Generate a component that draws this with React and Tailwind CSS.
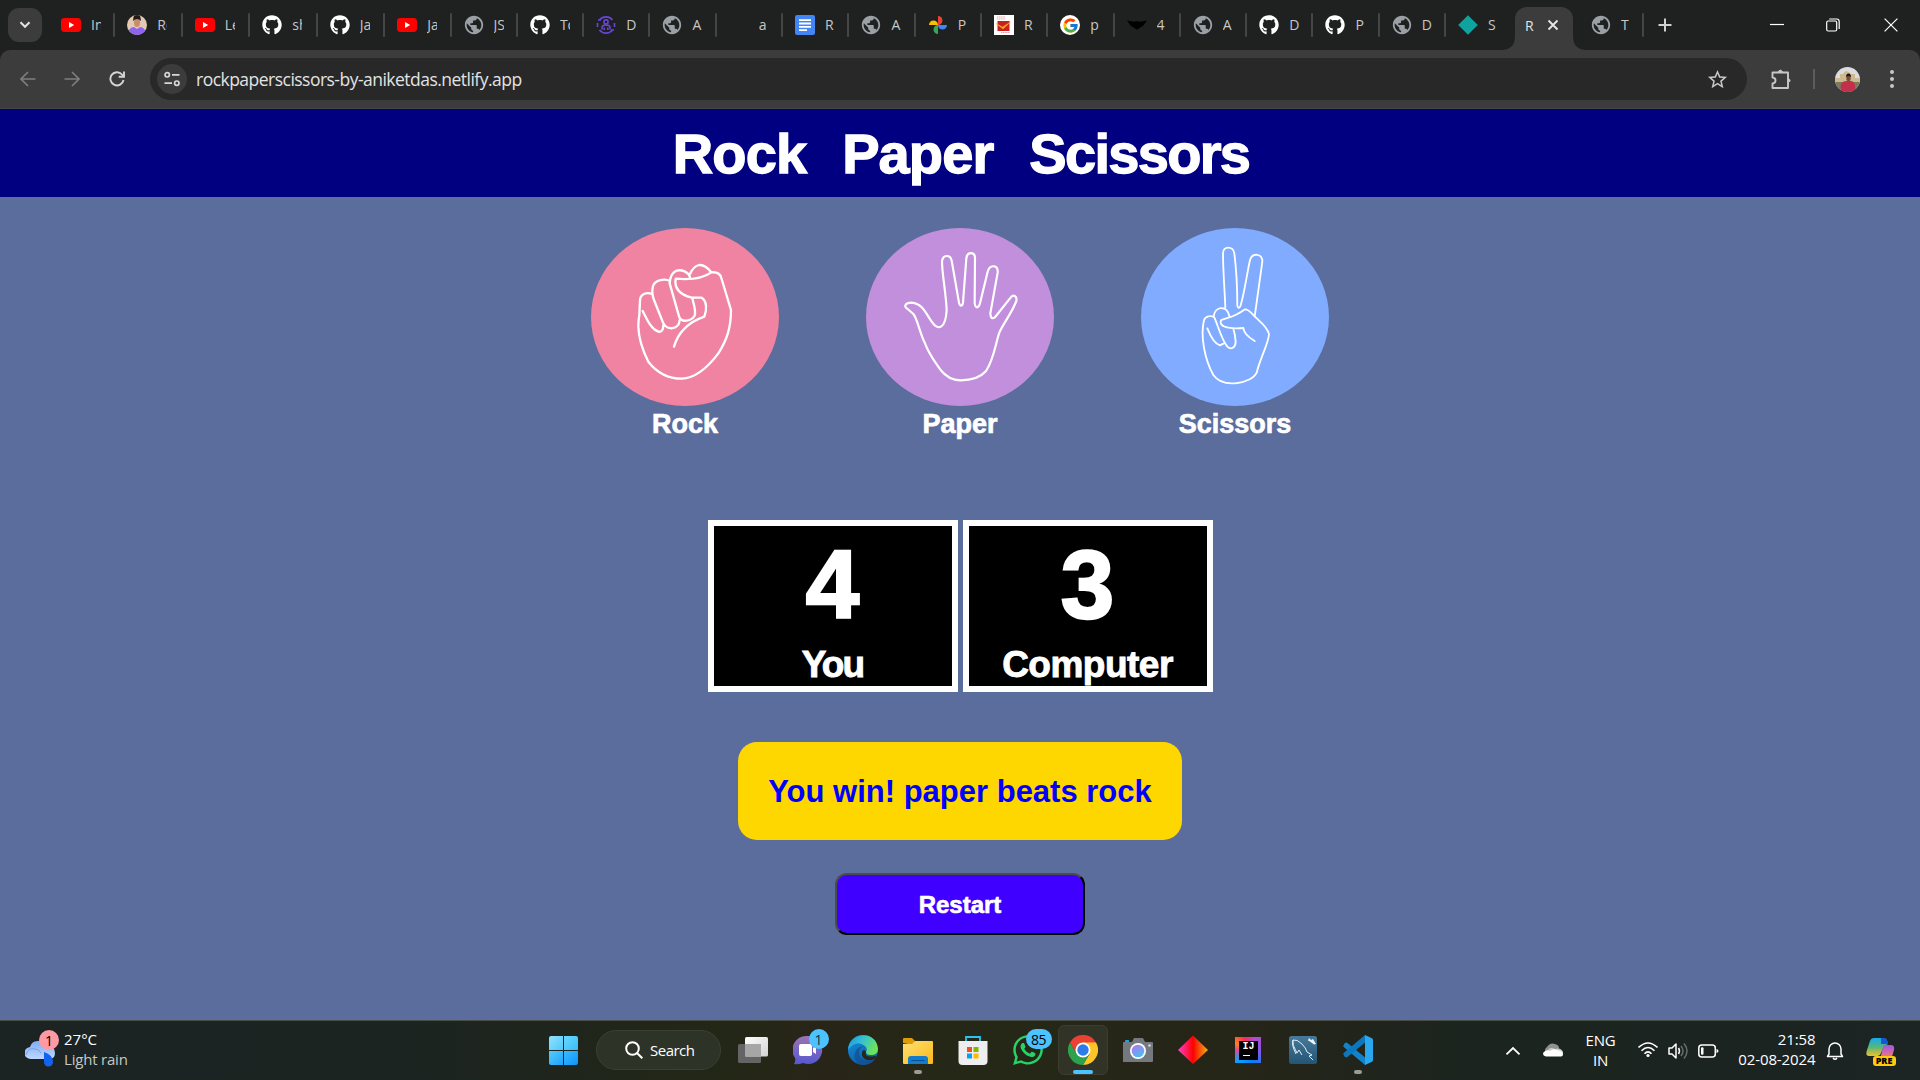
import React from "react";
import { FaGithub, FaWhatsapp } from "react-icons/fa";
import { FcGoogle } from "react-icons/fc";
import { MdPublic, MdStarBorder } from "react-icons/md";

const Globe = () => <MdPublic className="size-[22px] shrink-0 text-[#9aa0a6]" />;
const GitHub = () => <FaGithub className="size-5 text-white" />;
const YouTube = () => (
  <svg viewBox="0 0 20 20" className="size-5">
    <rect y="3" width="20" height="14" rx="3.4" fill="#f00" />
    <path d="M8 7l5.2 3L8 13z" fill="#fff" />
  </svg>
);
const Person = () => (
  <svg viewBox="0 0 20 20" className="size-5">
    <clipPath id="person"><circle cx="10" cy="10" r="10" /></clipPath>
    <g clipPath="url(#person)">
      <rect width="20" height="20" fill="#e2cbb2" />
      <path d="M0 20Q2 12 7 12l3 2 3-2q5 0 7 8z" fill="#8d63f0" />
      <ellipse cx="10" cy="7.500" rx="3" ry="4.500" fill="#c98d6d" />
      <path d="M6 6Q6-1 10-1T14 6Q10 2 6 6z" fill="#231a18" />
    </g>
  </svg>
);
const Community = () => (
  <svg viewBox="0 0 20 20" className="size-5" fill="none" stroke="#6a45d9" strokeWidth="1.6">
    <path d="M3.5 5A8.3 8.3 0 0 1 16.500 5M18.500 8v4M16.500 15A8.300 8.300 0 0 1 3.500 15M1.500 12V8" />
    <circle cx="10" cy="7" r="2.100" />
    <path d="M6 14.500v-2q0-2.500 4-2.500t4 2.500v2M8.200 15v-2.500M11.800 15v-2.500M2 5h3M15 15h3" />
  </svg>
);
const Docs = () => (
  <svg viewBox="0 0 20 20" className="size-5">
    <rect width="20" height="20" rx="2" fill="#4285f4" />
    <path d="M4 5h12M4 8.300h12M4 11.700h12M4 15h8" stroke="#fff" strokeWidth="1.800" transform="translate(0 .2)" />
  </svg>
);
const Photos = () => (
  <svg viewBox="0 0 20 20" className="size-5">
    <path d="M10 10V1a4.500 4.500 0 0 1 4.500 4.500C14.500 8 12.500 10 10 10z" fill="#ea4335" />
    <path d="M10 10h9a4.500 4.500 0 0 1-4.500 4.500C12 14.500 10 12.500 10 10z" fill="#4285f4" />
    <path d="M10 10v9a4.500 4.500 0 0 1-4.500-4.500C5.500 12 7.500 10 10 10z" fill="#34a853" />
    <path d="M10 10H1a4.500 4.500 0 0 1 4.500-4.500C8 5.500 10 7.500 10 10z" fill="#fbbc04" />
  </svg>
);
const Post = () => (
  <svg viewBox="0 0 20 20" className="size-5">
    <path fill="#fff" d="M0 0h20v20H0z" />
    <path fill="#c8201e" d="M3.500 6h12v10h-12z" />
    <path d="M2 8.500l6.500 3.500 8-5-7.500 7z" fill="#f5a81c" stroke="#f5a81c" strokeWidth=".5" />
    <path d="M3 2h8M3 4h8M7 17.500h9" stroke="#e7a0a0" strokeWidth="1" strokeDasharray="1.500 .6" />
  </svg>
);
const GoogleIcon = () => (
  <span className="flex size-5 items-center justify-center rounded-full bg-white">
    <FcGoogle className="size-[17px]" />
  </span>
);
const Wings = () => (
  <svg viewBox="0 0 20 20" className="size-5"><path d="M0 5.500l7 1.200 3-.7 3 .7 7-1.200-3.500 5L10 14.800 3.500 10.500z" fill="#000" /></svg>
);
const Diamond = () => (
  <svg viewBox="0 0 20 20" className="size-5"><path d="M10 .3L19.800 10 10 19.700.2 10z" fill="#0fa3a0" /></svg>
);
const Blank = () => <span className="size-5" />;

const tabs = [
  [YouTube, "In"], [Person, "Ro"], [YouTube, "Le"], [GitHub, "sh"], [GitHub, "Ja"], [YouTube, "Ja"],
  [Globe, "JS"], [GitHub, "To"], [Community, "D"], [Globe, "A"], [Blank, "a"], [Docs, "R"],
  [Globe, "A"], [Photos, "P"], [Post, "R"], [GoogleIcon, "p"], [Wings, "4"], [Globe, "A"],
  [GitHub, "D"], [GitHub, "P"], [Globe, "D"], [Diamond, "S"],
];

function Tab({ Icon, text, width = "w-[66.3px]" }) {
  return (
    <div className={`flex h-6 shrink-0 items-center pl-3 ${width}`}>
      <span className="flex size-5 shrink-0 items-center justify-center"><Icon /></span>
      <span className="ml-[10px] w-[10px] shrink-0 overflow-hidden whitespace-nowrap text-[14px] leading-6 text-[#c7c7c7]">{text}</span>
      <span className={`ml-auto h-6 w-0.5 shrink-0 rounded ${text === "S" ? "bg-transparent" : "bg-[#444544]"}`} />
    </div>
  );
}

function TabStrip() {
  return (
    <div className="flex h-[50px] items-center bg-[#1f2120]">
      <button className="ml-2 flex h-[34px] w-[34px] shrink-0 items-center justify-center rounded-[11px] bg-[#3c3c3c]">
        <svg viewBox="0 0 12 8" className="h-2 w-3" fill="none" stroke="#e3e3e3" strokeWidth="2"><path d="M1.500 1.300L6 5.800l4.500-4.500" /></svg>
      </button>
      <div className="ml-[7px] flex">
        {tabs.map(([Icon, text], i) => (
          <Tab key={i} Icon={Icon} text={text} width={i > 0 && i < 5 ? "w-[67.5px]" : "w-[66.3px]"} />
        ))}
      </div>
      <div className="-ml-[11.4px] flex h-full shrink-0 items-end">
        <svg viewBox="0 0 14 14" className="size-[14px]"><path d="M14 0v14H0Q14 14 14 0z" fill="#3c3c3c" /></svg>
        <div className="flex h-[43px] w-[58px] items-center rounded-t-[12px] bg-[#3c3c3c] pb-[7px] pl-[10px] text-[14px] text-[#e3e3e3]">
          <span className="w-[17px]">R</span>
          <svg viewBox="0 0 12 12" className="ml-[5px] size-3" stroke="#e8e8e8" strokeWidth="1.800"><path d="M1.500 1.500l9 9M10.500 1.500l-9 9" /></svg>
        </div>
        <svg viewBox="0 0 14 14" className="size-[14px]"><path d="M0 0v14h14Q0 14 0 0z" fill="#3c3c3c" /></svg>
      </div>
      <div className="-ml-[8px]"><Tab Icon={Globe} text="T" width="w-[65px]" /></div>
      <svg viewBox="0 0 14 14" className="ml-[14px] size-[14px]" stroke="#d0d0d0" strokeWidth="2"><path d="M7 .5v13M.5 7h13" /></svg>
      <div className="ml-auto flex items-center">
        <svg viewBox="0 0 14 14" className="mr-[42px] size-[14px]" stroke="#fff" strokeWidth="1.200"><path d="M0 6.500h14" /></svg>
        <svg viewBox="0 0 14 14" className="mr-[44px] size-[14px]" fill="none" stroke="#fff" strokeWidth="1.200"><rect x=".7" y="3" width="10" height="10" rx="1.500" /><path d="M3.200 1h7.500q2.500 0 2.500 2.500V11" /></svg>
        <svg viewBox="0 0 14 14" className="mr-[22px] size-[14px]" stroke="#fff" strokeWidth="1.200"><path d="M.6.6l12.800 12.800M13.400.6L.6 13.400" /></svg>
      </div>
    </div>
  );
}

function Toolbar() {
  return (
    <div className="bg-[#1f2120]">
      <div className="flex h-[59px] items-center rounded-t-[10px] border-b border-[#474747] bg-[#3c3c3c]">
        <svg viewBox="0 0 16 16" className="ml-5 size-4" fill="none" stroke="#7d7d7d" strokeWidth="1.700"><path d="M15.500 8H1.500M8 1L1 8l7 7" /></svg>
        <svg viewBox="0 0 16 16" className="ml-[28px] size-4" fill="none" stroke="#7d7d7d" strokeWidth="1.700"><path d="M.5 8h14M8 1l7 7-7 7" /></svg>
        <svg viewBox="0 0 16 16" className="ml-[29px] size-4" fill="none" stroke="#d5d5d5" strokeWidth="1.900"><path d="M14.500 9A6.600 6.600 0 1 1 13 3.500L14.800 5.500" /><path d="M15 .5v5.300H9.700" /></svg>
        <div className="ml-[25px] flex h-[42px] w-[1597px] items-center rounded-full bg-[#282828]">
          <span className="ml-[7px] flex size-[30px] items-center justify-center rounded-full bg-[#3c3c3c]">
            <svg viewBox="0 0 16 16" className="size-4" fill="none" stroke="#d8d8d8" strokeWidth="1.700">
              <circle cx="3.200" cy="3.800" r="2.200" /><circle cx="12.800" cy="12.200" r="2.200" /><path d="M8 3.800h7.500M.5 12.200H8" />
            </svg>
          </span>
          <span className="ml-[9px] mt-px text-[17.500px] tracking-[-0.520px] text-[#e3e3e3]">rockpaperscissors-by-aniketdas.netlify.app</span>
          <MdStarBorder className="ml-auto mr-[18px] size-[23px] text-[#c7c7c7]" />
        </div>
        <svg viewBox="0 0 20 21" className="ml-[24px] h-[21px] w-5" fill="none" stroke="#c7c7c7" strokeWidth="1.900" strokeLinejoin="round">
          <path d="M1.500 3.500h15.500v15.500H1.500v-4.500q3-.3 3-3t-3-3z" /><path d="M7 3q2.300-3.800 4.500 0zM17.500 9.500q3.200 2 0 4z" fill="#c7c7c7" strokeWidth="1" />
        </svg>
        <span className="ml-[22px] h-5 w-0.5 bg-[#5c5c5c]" />
        <svg viewBox="0 0 25 25" className="ml-[20px] size-[25px]">
          <clipPath id="profile"><circle cx="12.500" cy="12.500" r="12.500" /></clipPath>
          <g clipPath="url(#profile)">
            <path fill="#dcdce0" d="M0 0h25v25H0z" />
            <path fill="#cdb98f" d="M0 11h5V7h3q3-6 8 0h4v4h5v5H0z" />
            <path fill="#7a7a5c" d="M0 15h25v10H0z" />
            <path fill="#c3304b" d="M6 25q-2-11 5-11h5q5 0 4 11z" />
            <ellipse cx="13.500" cy="11" rx="2.200" ry="3.200" fill="#7b4b3a" />
            <path d="M11 10q0-3.500 2.500-3.500T16 10q-2.500-2-5 0z" fill="#1e1614" />
          </g>
        </svg>
        <svg viewBox="0 0 4 18" className="ml-[30px] h-[18px] w-1" fill="#c7c7c7"><circle cx="2" cy="2" r="2" /><circle cx="2" cy="9" r="2" /><circle cx="2" cy="16" r="2" /></svg>
      </div>
    </div>
  );
}

const hands = [
  {
    name: "Rock", fill: "bg-[#f083a2]", box: "33 24 564 534", width: 7,
    d: "M175 320C176 350 185 385 205 425C230 457 265 476 305 476C350 474 385 440 415 400C440 360 453 325 453 270L424 174C420 156 405 156 394 157C385 145 370 134 357 135C343 139 335 150 330 162M394 157C365 178 330 180 287 176C283 200 292 222 335 233L365 233C381 242 381 270 373 290C330 305 295 335 282 380M330 172C325 155 305 148 290 152C275 158 270 170 269 190L298 292C305 308 335 305 345 285C347 265 340 250 337 235M270 183C255 174 225 180 219 198C215 215 218 230 222 240L250 310C260 332 297 330 299 300M216 222C200 215 180 222 180 242L178 285Q175 300 175 320M188 273C200 295 212 327 235 335Q250 337 250 315",
  },
  {
    name: "Paper", fill: "bg-[#c28fdc]", box: "48 24 564 534", width: 6.500,
    d: "M173 267C160 260 165 248 185 248C215 250 225 275 245 305C265 335 287 325 290 270C288 220 276 160 276 125C278 103 301 103 305 122L327 248C330 260 337 260 339 248L349 115C352 93 375 95 375 115L374 250C377 267 386 265 390 250L413 155C420 131 445 135 443 158L421 280C422 298 430 298 438 288L480 235C490 220 502 228 499 243C485 280 460 310 447 340C435 380 430 420 408 453Q385 480 332 481Q295 480 272 450C255 425 238 405 225 370C210 342 202 295 190 282Z",
  },
  {
    name: "Scissors", fill: "bg-[#80abff]", box: "63 24 564 534", width: 5.500,
    d: "M316 262C314 210 309 150 309 100C309 77 340 77 343 100C348 140 352 220 352 258Q356 270 362 256C375 210 380 165 390 120C397 97 428 100 427 125L404 290M304 300C330 291 343 292 375 268C387 268 395 280 408 293C422 308 440 318 447 342C446 370 422 410 410 458C395 490 310 507 280 465C255 420 240 350 252 300C257 287 273 286 283 292C295 320 305 360 322 380C335 392 347 380 347 365Q346 345 340 326M281 288C285 260 320 253 328 288M304 300C298 310 305 320 325 323Q345 327 370 324C372 340 385 352 404 363M262 325C272 350 285 372 300 376L310 371",
  },
];

function Score({ value, children }) {
  return (
    <div className="flex h-[172px] w-[250px] flex-col items-center border-[6px] border-white bg-black">
      <div className="mt-[11px] text-[96px] leading-[96px] [-webkit-text-stroke:2.5px_white]">{value}</div>
      {children}
    </div>
  );
}

function Page() {
  return (
    <div className="flex h-[911px] flex-col items-center bg-[#5a6d9c] font-['Liberation_Sans',sans-serif] font-bold text-white">
      <h1 className="flex h-[88px] w-full items-center justify-center gap-[36px] bg-[#000080] pl-[2px] pt-[1px] text-[56px] leading-none [-webkit-text-stroke:1.3px_white]">
        <span className="tracking-[-0.900px]">Rock</span><span className="tracking-[-0.9px]">Paper</span><span className="tracking-[-1.700px]">Scissors</span>
      </h1>
      <div className="mt-[31px] flex gap-[87px]">
        {hands.map((h) => (
          <div key={h.name} className="w-[188px] text-center">
            <div className={`h-[178px] rounded-[50%] ${h.fill}`}>
              <svg viewBox={h.box} className="h-[178px] w-[188px]" fill="none" stroke="#fff" strokeWidth={h.width} strokeLinecap="round" strokeLinejoin="round"><path d={h.d} /></svg>
            </div>
            <div className="mt-[1px] h-[34px] text-[27px] leading-[34px] [-webkit-text-stroke:0.7px_white]">{h.name}</div>
          </div>
        ))}
      </div>
      <div className="mt-[79px] flex gap-[5px]">
        <Score value="4"><div className="mt-[11px] text-[37px] leading-[42px] tracking-[-1.800px] [-webkit-text-stroke:0.9px_white]">You</div></Score>
        <Score value="3"><div className="mt-[11px] text-[37px] leading-[42px] tracking-[-0.500px] [-webkit-text-stroke:0.9px_white]">Computer</div></Score>
      </div>
      <div className="mt-[50px] flex h-[98px] w-[444px] items-center justify-center whitespace-nowrap rounded-[19px] bg-[#ffd700] pt-[2px] text-[31px] text-[#0000ff]">You win! paper beats rock</div>
      <button className="mt-[33px] h-[62px] w-[250px] rounded-[12px] border-2 border-b-black border-l-[#4c4c4c] border-r-black border-t-[#4c4c4c] bg-[#4000ff] pt-px text-[24px] [-webkit-text-stroke:0.6px_white]">Restart</button>
    </div>
  );
}

const Cell = ({ children, running }) => (
  <div className="relative flex h-[60px] w-[55px] shrink-0 items-center justify-center">
    {children}
    {running && <span className="absolute bottom-[6px] h-1 w-2 rounded-full bg-[#9a9a96]" />}
  </div>
);

function Taskbar() {
  return (
    <div className="flex h-[60px] items-center border-t border-[#4b4e49] bg-[linear-gradient(90deg,#1b2423_0%,#1c2421_22%,#232716_38%,#282518_43%,#252817_50%,#252518_65%,#1c241f_76%,#1c2424_100%)] text-white">
      <div className="relative -mt-[3px] ml-[25px] size-[38px]">
        <svg viewBox="0 0 32 38" className="h-[38px] w-8">
          <defs><linearGradient id="cloud" x2="0" y2="1"><stop stopColor="#7eacf5" /><stop offset="1" stopColor="#bdd6ff" /></linearGradient></defs>
          <path d="M6 29a6 6 0 0 1-1-12q2-7 9-6 7-3 10 5 6 1 6 7 0 6-6 6z" fill="url(#cloud)" />
          <path d="M1 25q2-8 9-6 4 0 6 4" fill="none" stroke="#76a1e8" />
          <path d="M19 22q9 3 9 10a4.300 4.300 0 0 1-9 0z" fill="#1463ef" />
        </svg>
        <span className="absolute left-[14px] top-0 flex size-5 items-center justify-center rounded-full bg-[#ff99a4] text-[14px] text-black">1</span>
      </div>
      <div className="-mt-1 ml-[1px] w-[120px] text-[15px] leading-5"><div>27°C</div><div className="tracking-[-0.2px] text-[#c5c8c6]">Light rain</div></div>

      <div className="ml-[365px] grid size-[29px] grid-cols-2 gap-px">
        <span className="rounded-tl-[2px] bg-linear-to-br from-[#8fe2ff] to-[#4cc8fa]" /><span className="rounded-tr-[2px] bg-linear-to-br from-[#68d8ff] to-[#37bdf9]" />
        <span className="rounded-bl-[2px] bg-linear-to-br from-[#54cbfb] to-[#1ba3fb]" /><span className="rounded-br-[2px] bg-linear-to-br from-[#38bcfb] to-[#0c92fb]" />
      </div>
      <div className="-mt-px ml-[18px] flex h-10 w-[125px] items-center rounded-full border border-[#3b4034] bg-[#2d3326] pl-[28px]">
        <svg viewBox="0 0 18 18" className="size-[18px]" fill="none" stroke="#fff" strokeWidth="2"><circle cx="7.500" cy="7.500" r="6.300" /><path d="M12 12l5.300 5.300" /></svg>
        <span className="ml-[7px] text-[15px] tracking-[-0.500px]">Search</span>
      </div>

      <div className="-mt-px ml-[4.500px] flex">
        <Cell>
          <svg viewBox="0 0 30 30" className="size-[30px]">
            <defs><linearGradient id="tv" x2="1" y2="1"><stop stopColor="#fff" /><stop offset="1" stopColor="#d2d2d2" /></linearGradient></defs>
            <rect x="0" y="9" width="23" height="19" rx="1.500" fill="#646464" /><rect x="7" y="2" width="23" height="19.500" rx="1.500" fill="url(#tv)" /><path d="M7 9h16v12.500H7z" fill="#a6a6a6" />
          </svg>
        </Cell>
        <Cell>
          <svg viewBox="0 0 30 30" className="size-[30px]">
            <defs><linearGradient id="chat" x2="0" y2="1"><stop stopColor="#9b73b4" /><stop offset="1" stopColor="#5558d0" /></linearGradient></defs>
            <path d="M15 1a14 14 0 1 1-5 27q-5 2-9 1 2-4 1-6A14 14 0 0 1 15 1z" fill="url(#chat)" /><rect x="6" y="9" width="13" height="12" rx="2" fill="#fff" /><path d="M20 13l3-2v8l-3-2z" fill="#fff" />
          </svg>
          <span className="absolute left-[28px] top-[9px] flex size-5 items-center justify-center rounded-full bg-[#4cc2ff] text-[14px] text-[#18303c]">1</span>
        </Cell>
        <Cell>
          <svg viewBox="0 0 30 30" className="size-[30px]">
            <defs>
              <linearGradient id="edgeTop" x2="1" y2=".4"><stop stopColor="#1694e4" /><stop offset=".5" stopColor="#35c1d3" /><stop offset="1" stopColor="#6ce35b" /></linearGradient>
              <linearGradient id="edgeLow" x2=".6" y2="1"><stop stopColor="#1794de" /><stop offset="1" stopColor="#0c59a9" /></linearGradient>
            </defs>
            <circle cx="15" cy="15" r="15" fill="url(#edgeLow)" />
            <path d="M0 15C1-4 29-5 30 14q0 6-7 6-5 0-5-3 2-3-1-6Q8 4 0 15z" fill="url(#edgeTop)" />
            <path d="M17 11q-5 0-6 6 0 8 8 9 5 0 8-2-6 8-15 5.500Q5 26 7 18q2-7 10-7z" fill="#12508f" opacity=".75" />
            <path d="M18 17q-2 6 9 4 2 0 1 2-4 3-9 2-6-2-5-8 2-4 4 0z" fill="#27281b" />
          </svg>
        </Cell>
        <Cell running>
          <svg viewBox="0 0 30 30" className="size-[30px]">
            <defs><linearGradient id="folder" x2="1" y2="1"><stop stopColor="#ffe177" /><stop offset="1" stopColor="#fbb815" /></linearGradient></defs>
            <path d="M0 8V4q0-1 1-1h8l3 3-2 4z" fill="#e19c05" /><path d="M0 9h9l3-3h17q1 0 1 1v21q0 1-1 1H1q-1 0-1-1z" fill="url(#folder)" /><path d="M5 29v-5q0-3 3-3h14q3 0 3 3v5z" fill="#117dcc" /><path d="M8.500 25.500h13" stroke="#0a4c91" />
          </svg>
        </Cell>
        <Cell>
          <svg viewBox="0 0 30 30" className="size-[30px]">
            <path d="M8 7V2h14v5" fill="none" stroke="#2cc3f3" strokeWidth="1.800" /><path d="M.5 6h29v20q0 4-4 4h-21q-4 0-4-4z" fill="#eee" /><path fill="#f25022" d="M9 12h5v5H9z" /><path fill="#7fba00" d="M15.500 12h5v5h-5z" /><path fill="#00a4ef" d="M9 18.500h5v5H9z" /><path fill="#ffb900" d="M15.500 18.500h5v5h-5z" />
          </svg>
        </Cell>
        <Cell>
          <FaWhatsapp className="size-[34px] text-[#25d366]" />
          <span className="absolute left-[25px] top-[9px] flex h-5 w-[26px] items-center justify-center rounded-full bg-[#4cc2ff] text-[14px] tracking-[-0.500px] text-black">85</span>
        </Cell>
        <Cell>
          <div className="flex size-[50px] items-center justify-center rounded-md border border-[#3c3d30] bg-[#323327]">
            <svg viewBox="0 0 30 30" className="size-[30px]">
              <path d="M15 15L2 7.500A15 15 0 0 1 28 7.500z" fill="#e94235" /><path d="M15 15V7.500h13A15 15 0 0 1 15 30l6.500-11z" fill="#fdc526" /><path d="M2 7.500A15 15 0 0 0 15 30l6.500-11.300L8.500 18.700z" fill="#2ba24c" /><path d="M15 7.500h13L2 7.500l6.500 11.200z" fill="#e94235" /><circle cx="15" cy="15" r="7.500" fill="#fff" /><circle cx="15" cy="15" r="5.700" fill="#2d7bea" />
            </svg>
          </div>
          <span className="absolute bottom-[6px] h-1 w-5 rounded-full bg-[#4cc2ff]" />
        </Cell>
        <Cell>
          <svg viewBox="0 0 30 30" className="size-[30px]">
            <defs><linearGradient id="lens" x2=".6" y2="1"><stop stopColor="#bd71e5" /><stop offset="1" stopColor="#4bbcf4" /></linearGradient></defs>
            <path d="M2 8V6q0-1 1-1h3v3z" fill="#18a3e5" /><path d="M1 7h8l2-4h9l2 4h7q1 0 1 1v18q0 1-1 1H0V8q0-1 1-1z" fill="#747980" /><circle cx="15" cy="16" r="8" fill="#fff" /><circle cx="15" cy="16" r="6.300" fill="url(#lens)" /><circle cx="26.500" cy="10.500" r="1.300" fill="#d7d9db" />
          </svg>
        </Cell>
        <Cell>
          <svg viewBox="0 0 30 30" className="size-[30px]">
            <defs><linearGradient id="gem"><stop stopColor="#fc42cf" /><stop offset=".5" stopColor="#f00" /><stop offset=".55" stopColor="#f21602" /><stop offset="1" stopColor="#f8ae14" /></linearGradient></defs>
            <path d="M15 .5L30 15 15 29 0 15z" fill="url(#gem)" />
          </svg>
        </Cell>
        <Cell>
          <div className="flex size-[26px] items-center justify-center bg-[conic-gradient(from_300deg,#fc801d,#fe2857_12%,#b14bd1_25%,#7c5be8_45%,#087cfa_60%,#07a3ff_78%,#e8469a_92%,#fc801d)]">
            <div className="flex size-[19px] flex-col bg-black pl-1 pt-px font-['Liberation_Mono',monospace] text-[10px] font-bold leading-[10px]">IJ<span className="mt-[3px] h-px w-[7px] bg-white" /></div>
          </div>
        </Cell>
        <Cell>
          <svg viewBox="0 0 28 28" className="size-7">
            <defs><linearGradient id="sql" x2="0" y2="1"><stop stopColor="#47799b" /><stop offset="1" stopColor="#235674" /></linearGradient></defs>
            <rect width="28" height="28" rx="2.500" fill="url(#sql)" /><path d="M7 18Q2 8 4 4q4-1 9 4 4 4 5 8l5 3-3 1 4 4M4 4q-1 5 3 11l1 2 2-3 3 5" fill="none" stroke="#e3eef4" strokeWidth="1" /><path d="M20 2l2 2 2-1 3 5-2 .500-4-3-2-1z" fill="#eef4f7" />
          </svg>
        </Cell>
        <Cell running>
          <svg viewBox="0 0 30 30" className="size-[30px]">
            <path d="M1.500 8.500Q3 7 4.500 8L24 24l-2 6L.7 12q-.8-1 0-2z" fill="#1283c9" /><path d="M1.500 21.500Q3 23 4.500 22L24 6l-2-6L.7 18q-.8 1 0 2z" fill="#0c77bd" /><path d="M22 0l7 3.300q1 .6 1 1.700v20q0 1.100-1 1.700L22 30z" fill="#29a8f0" /><path d="M16 15l6-5v10z" fill="#25271a" />
          </svg>
        </Cell>
      </div>

      <svg viewBox="0 0 16 10" className="ml-[119px] h-[10px] w-4" fill="none" stroke="#fff" strokeWidth="1.800"><path d="M1.500 8.300L8 2l6.500 6.300" /></svg>
      <svg viewBox="0 0 20 14" className="-mt-px ml-[22px] h-[14px] w-5"><path d="M4 11a4 4 0 0 1 0-7q3-5 8-3 4 1 4 4l-2 6z" fill="#919191" /><path d="M4 9q2-6 8-3 6-2 8 3v2H4z" fill="#ccc" /><path d="M3 13.500Q0 13 0 10q3-4 7-2 3-3 7-1 6 1 6 4 0 2.500-2 2.500z" fill="#fff" /></svg>
      <div className="-mt-0.5 ml-[15px] w-[46px] text-center text-[15px] leading-5 tracking-[-0.2px]"><div>ENG</div><div>IN</div></div>
      <svg viewBox="0 0 20 16" className="-mt-0.5 ml-[14px] h-4 w-5" fill="none" stroke="#fff" strokeWidth="1.600"><path d="M.5 5.500Q10-3.500 19.500 5.500M3.500 8.700Q10 2.300 16.500 8.700M6.500 11.700Q10 8 13.500 11.700" /><circle cx="10" cy="13.500" r="1.600" fill="#fff" stroke="none" /></svg>
      <svg viewBox="0 0 20 18" className="ml-[10px] h-[18px] w-5" fill="none" stroke="#fff" strokeWidth="1.500"><path d="M1 6h3l4-4v14l-4-4H1zM10.500 6q2 3 0 6" strokeLinejoin="round" /><path d="M13 4q4 5 0 10M16 1.500q6 7.500 0 15" stroke="#686d69" /></svg>
      <svg viewBox="0 0 21 14" className="ml-[10px] h-[14px] w-[21px]" fill="none" stroke="#fff" strokeWidth="1.500"><rect x=".8" y="1" width="16.500" height="12" rx="3" /><path d="M18.500 5v4q2-.500 2-2t-2-2z" fill="#fff" stroke="none" /><rect x="3" y="3.300" width="2.500" height="7.400" rx="1" fill="#fff" stroke="none" /></svg>
      <div className="-mt-1 ml-[11px] w-[86px] whitespace-nowrap text-right text-[15px] leading-5 tracking-[-0.1px]"><div>21:58</div><div>02-08-2024</div></div>
      <svg viewBox="0 0 18 20" className="ml-[10px] h-5 w-[18px]" fill="none" stroke="#fff" strokeWidth="1.500" strokeLinejoin="round"><path d="M3 13V8a6 6 0 0 1 12 0v5l1.500 2.500h-15zM7 17q2 2.500 4 0" /></svg>
      <div className="relative ml-[22px] size-[30px]">
        <svg viewBox="0 0 30 30" className="size-[30px]">
          <defs>
            <linearGradient id="coA" x2="0" y2="1"><stop stopColor="#18a9ee" /><stop offset=".5" stopColor="#55b77b" /><stop offset="1" stopColor="#eec12b" /></linearGradient>
            <linearGradient id="coB" x2="0" y2="1"><stop stopColor="#a353e8" /><stop offset="1" stopColor="#ff8460" /></linearGradient>
          </defs>
          <path d="M8 2h10q3 0 4 6l-4 2-3 7q-1 3-4 3H3q-4 0-2-6L4 5q1-3 4-3z" fill="url(#coA)" /><path d="M15 2h3q3 0 4 6h-7z" fill="#1557d5" /><path d="M19 9h6q4 0 3 5l-3 10H12q3-2 4-9 1-6 3-6z" fill="url(#coB)" />
        </svg>
        <span className="absolute left-[7px] top-[20px] flex h-[10px] w-[23px] items-center justify-center rounded-[3px] bg-[#ffc90e] text-[9px] font-extrabold leading-none text-black">PRE</span>
      </div>
    </div>
  );
}

export default function App() {
  return (
    <div className="h-[1080px] w-[1920px] overflow-hidden font-['Open_Sans','Noto_Sans',sans-serif]">
      <TabStrip />
      <Toolbar />
      <Page />
      <Taskbar />
    </div>
  );
}
